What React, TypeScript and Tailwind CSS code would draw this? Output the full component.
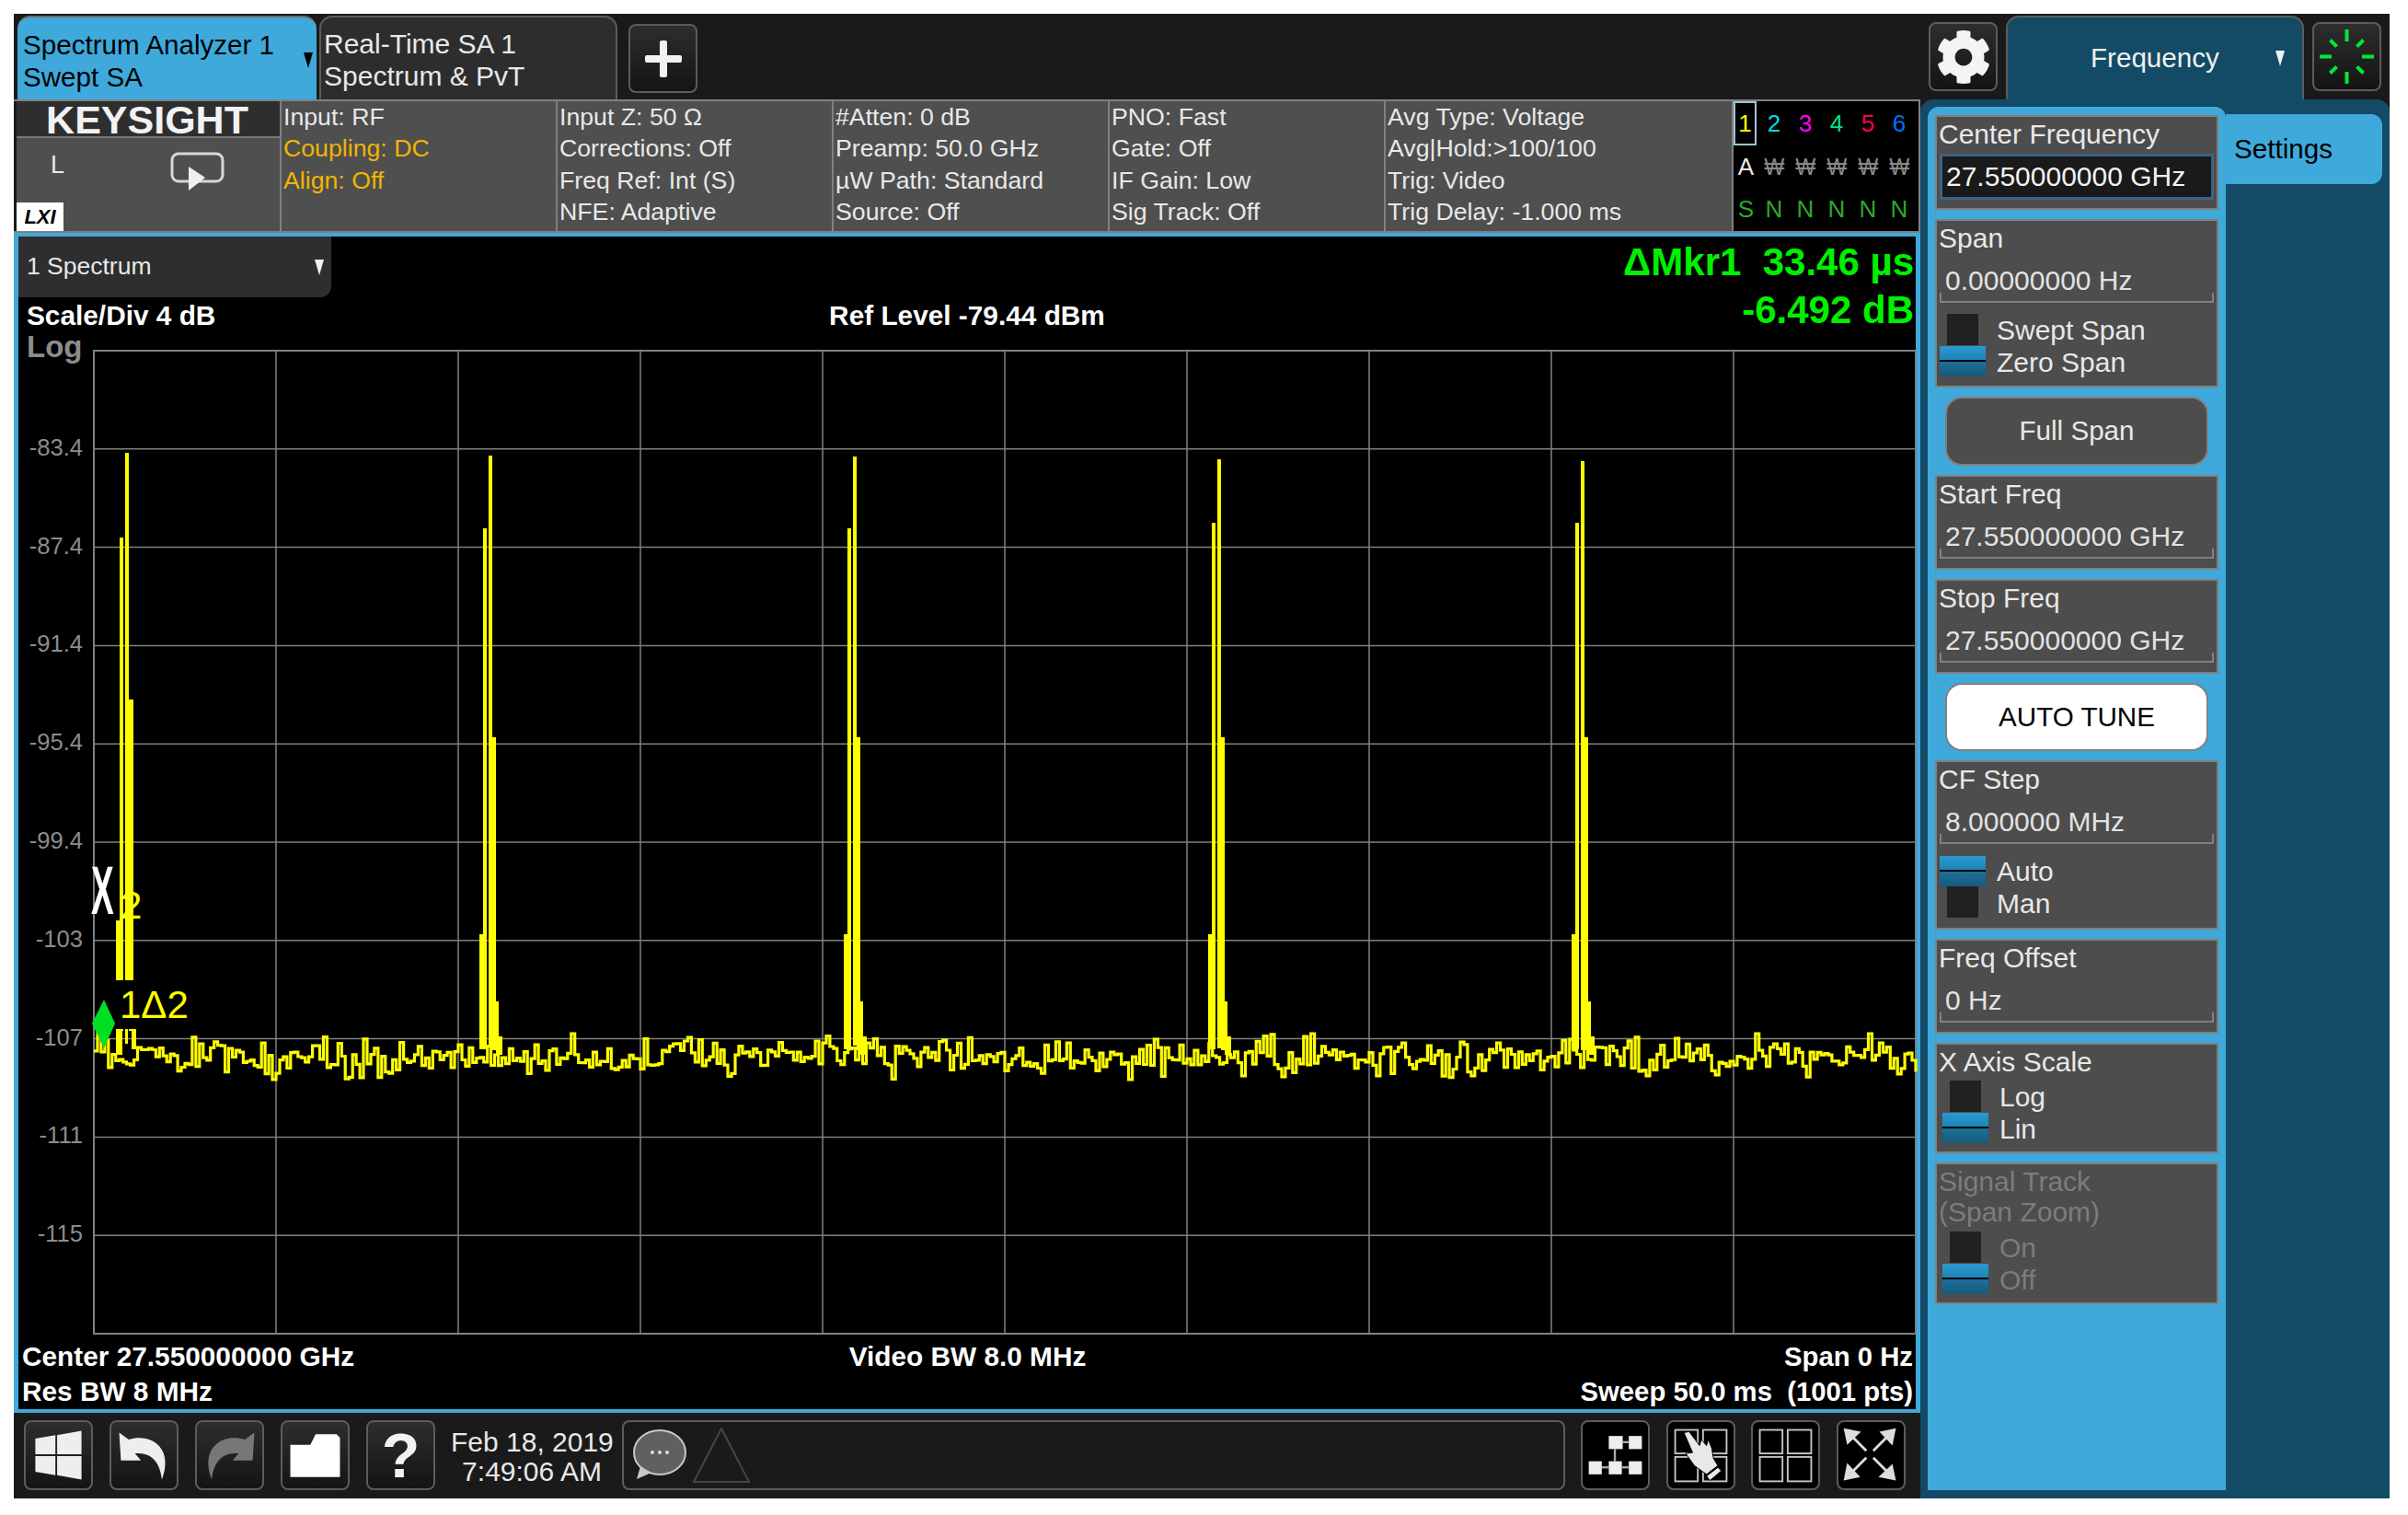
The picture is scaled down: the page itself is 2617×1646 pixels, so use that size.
import React from "react";
import { FaCog } from "react-icons/fa";

function mulberry(a: number) {
  return () => {
    a |= 0; a = (a + 0x6d2b79f5) | 0;
    let t = Math.imul(a ^ (a >>> 15), 1 | a);
    t = (t + Math.imul(t ^ (t >>> 7), 61 | t)) ^ t;
    return ((t ^ (t >>> 14)) >>> 0) / 4294967296;
  };
}
const rnd = mulberry(20190218);
function buildTrace() {
  let d = "";
  let base = 767;
  for (let i = 0; i <= 500; i++) {
    base = 767 + (base - 767) * 0.6 + (rnd() - 0.5) * 6;
    const g = (rnd() + rnd() + rnd() - 1.5) * 20;
    const y = Math.max(742, Math.min(797, base + g));
    const x = i * 3.96;
    d += i === 0 ? `M0 ${y.toFixed(1)}` : `H${x.toFixed(1)}V${y.toFixed(1)}`;
  }
  return d;
}
const tracePath = buildTrace();
const Y = "#ffff00";
const mains = [
  { m: 429, top: 114, sub: 193, side: 420 },
  { m: 825, top: 115, sub: 193, side: 420 },
  { m: 1221, top: 118, sub: 187, side: 420 },
  { m: 1616, top: 120, sub: 187, side: 420 },
];
const yLabels = ["-83.4", "-87.4", "-91.4", "-95.4", "-99.4", "-103", "-107", "-111", "-115"];

function Plot() {
  return (
    <svg width="1980" height="1068" viewBox="0 0 1980 1068" className="block overflow-visible">
      <rect x="0" y="0" width="1980" height="1068" fill="#000" stroke="#808080" strokeWidth="2" />
      {Array.from({ length: 9 }).map((_, i) => (
        <line key={i} x1={(i + 1) * 198} x2={(i + 1) * 198} y1="0" y2="1068" stroke="#808080" strokeWidth="1.5" />
      ))}
      {Array.from({ length: 9 }).map((_, i) => (
        <line key={i} y1={(i + 1) * 106.8} y2={(i + 1) * 106.8} x1="0" x2="1980" stroke="#808080" strokeWidth="1.5" />
      ))}
      <path d={tracePath} fill="none" stroke={Y} strokeWidth="3.2" />
      <g fill={Y}>
        <rect x="24" y="619" width="8" height="120" />
        <rect x="28" y="203" width="4" height="500" />
        <rect x="34" y="111" width="4" height="620" />
        <rect x="38" y="379" width="5" height="360" />
        {mains.map((p) => (
          <g key={p.m}>
            <rect x={p.m - 10} y="634" width="8" height="125" />
            <rect x={p.m - 6} y={p.sub} width="4" height="565" />
            <rect x={p.m} y={p.top} width="4" height="640" />
            <rect x={p.m + 4} y={p.side} width="4" height="340" />
            <rect x={p.m + 8} y="707" width="3" height="50" />
            <rect x={p.m + 8} y="745" width="7" height="20" />
          </g>
        ))}
      </g>
      <rect x="24" y="684" width="84" height="53" fill="#000" />
      <g fill={Y}>
        <rect x="24" y="737" width="7" height="28" />
        <rect x="34" y="737" width="3" height="16" />
        <rect x="41" y="737" width="5" height="22" />
      </g>
      <polygon points="-2,731 11,705 23,731 11,758" fill="#00e020" />
    </svg>
  );
}

function Caret({ color }: { color: string }) {
  return (
    <svg width="12" height="17" viewBox="0 0 12 17" className="shrink-0">
      <polygon points="1,0 11,0 6,17" fill={color} />
    </svg>
  );
}

function IconButton({ children, className }: { children: React.ReactNode; className?: string }) {
  return (
    <div className={`w-[75px] h-[76px] shrink-0 rounded-[8px] border-2 border-[#5c5c5c] flex items-center justify-center ${className ?? "bg-gradient-to-b from-[#2e2e2e] to-[#141414]"}`}>
      {children}
    </div>
  );
}

function Card({ h, children }: { h: string; children: React.ReactNode }) {
  return <div className={`${h} border-2 border-[#808080] bg-[#4d4d4d] pl-[2px] pr-[3px] pt-[2px] flex flex-col text-[#e8e8e8]`}>{children}</div>;
}
function Label({ children, dim }: { children: React.ReactNode; dim?: boolean }) {
  return <div className={`text-[30px] leading-[33px] ${dim ? "text-[#7c7c7c]" : ""}`}>{children}</div>;
}
function Value({ children }: { children: React.ReactNode }) {
  return (
    <div>
      <div className="mt-[13px] pl-[7px] text-[30px] leading-[33px] text-[#e2e2e2]">{children}</div>
      <div className="h-[11px] -mt-[3px] ml-[1px] border-2 border-t-0 border-[#808080]" />
    </div>
  );
}
function Toggle({ a, b, sel, dim, cls }: { a: string; b: string; sel: 0 | 1; dim?: boolean; cls: string }) {
  const row = (t: string, on: boolean, extra: string) => (
    <div className="h-[34px] flex items-center">
      <div className="w-[50px] h-[34px] flex items-center justify-center shrink-0">
        {on ? (
          <div className="w-[50px] h-[33px] flex flex-col">
            <div className="flex-1 bg-gradient-to-b from-[#2a9ad2] to-[#2084b6]" />
            <div className="h-[2px] bg-black" />
            <div className="flex-1 bg-gradient-to-b from-[#1c7099] to-[#175a7c]" />
          </div>
        ) : (
          <div className="w-[34px] h-[34px] bg-[#212121]" />
        )}
      </div>
      <div className={`ml-[12px] text-[30px] leading-[34px] ${extra} ${dim ? "text-[#7c7c7c]" : "text-[#e8e8e8]"}`}>{t}</div>
    </div>
  );
  return (
    <div className={cls}>
      {row(a, sel === 0, "pt-[1px]")}
      {row(b, sel === 1, "pt-[3px]")}
    </div>
  );
}

function InfoCol({ lines }: { lines: { t: string; o?: boolean }[] }) {
  return (
    <div className="w-[300px] shrink-0 border-l-2 border-[#808080] pl-[2px] bg-[#4f4f4f] text-[26.7px] leading-[34.3px] text-[#e8e8e8]">
      {lines.map((l) => (
        <div key={l.t} className={l.o ? "text-[#f2b400]" : ""}>{l.t}</div>
      ))}
    </div>
  );
}

function TraceCol() {
  const cols = ["#ffff00", "#00d8e8", "#ff00ff", "#00e080", "#ff0050", "#0070ff"];
  const grid = "grid grid-cols-[27px_34px_34px_34px_34px_34px] justify-items-center items-center";
  return (
    <div className="flex-1 bg-black border-x-2 border-[#808080] flex flex-col font-['Liberation_Sans','DejaVu_Sans',sans-serif]">
      <div className={`${grid} h-[48px] text-[26px]`}>
        {cols.map((c, i) => (
          <div key={c} style={{ color: c }} className={i === 0 ? "w-[25px] h-[48px] border-2 border-[#9cc4d4] flex items-center justify-center justify-self-start" : ""}>{i + 1}</div>
        ))}
      </div>
      <div className={`${grid} h-[48px] text-[#8a8a8a]`}>
        <div className="text-[#e8e8e8] text-[26px]">A</div>
        {[0, 1, 2, 3, 4].map((i) => <div key={i} className="text-[26px] leading-[30px] scale-x-90">₩</div>)}
      </div>
      <div className={`${grid} h-[47px] text-[26px] text-[#2ea82e]`}>
        {["S", "N", "N", "N", "N", "N"].map((s, i) => <div key={i}>{s}</div>)}
      </div>
    </div>
  );
}

function ArrowOut() {
  return (
    <svg width="75" height="76" viewBox="0 0 75 76">
      {[0, 90, 180, 270].map((r) => (
        <g key={r} transform={`rotate(${r} 36 37)`}>
          <polygon points="6,7 26,11 10,26" fill="#dddddd" />
          <line x1="16" y1="17" x2="32" y2="33" stroke="#dddddd" strokeWidth="3" />
        </g>
      ))}
    </svg>
  );
}

function Quad({ hand }: { hand?: boolean }) {
  return (
    <svg width="75" height="76" viewBox="0 0 75 76">
      <g fill="none" stroke="#c4c4c4" strokeWidth="2">
        <rect x="8" y="9" width="26" height="27" />
        <rect x="40" y="9" width="27" height="27" />
        <rect x="8" y="40" width="26" height="28" />
        <rect x="40" y="40" width="27" height="28" />
      </g>
      {hand && (
        <g fill="#e8e8e8" stroke="#000" strokeWidth="1">
          <path d="M18 12 L24 11 L36 27 L38 20 L44 27 L46 20 L50 30 L52 42 L57 50 L44 60 L30 50 L20 36 L28 35 Z" />
          <path d="M44 62 L57 52 L61 56 L48 67 Z" />
        </g>
      )}
    </svg>
  );
}

export default function App() {
  return (
    <div className="w-[2617px] h-[1646px] bg-white pl-[15px] pt-[15px] font-['Liberation_Sans',sans-serif] overflow-hidden">
      <div className="w-[2582px] h-[1613px] flex">
        {/* left column */}
        <div className="w-[2072px] flex flex-col shrink-0 bg-[#1a1a1a]">
          <div className="h-[93px] flex pl-[4px] pt-[2px] items-start shrink-0">
            <div className="w-[325px] h-[91px] rounded-t-[14px] border-t-2 border-[#6a6a6a] bg-[#3ea9da] flex pl-[6px] pr-[3px] text-black text-[29.6px] leading-[35px]">
              <div className="flex-1 pt-[12px]">
                <div>Spectrum Analyzer 1</div>
                <div>Swept SA</div>
              </div>
              <div className="pt-[38px]"><Caret color="#000" /></div>
            </div>
            <div className="ml-[3px] w-[324px] h-[91px] rounded-t-[14px] border-2 border-b-0 border-[#5c5c5c] bg-[#2d2d2d] pl-[3px] pt-[11px] text-[#e8e8e8] text-[30px] leading-[35px]">
              <div>Real-Time SA 1</div>
              <div>Spectrum &amp; PvT</div>
            </div>
            <div className="ml-[12px] mt-[9px] w-[75px] h-[75px] rounded-[8px] border-2 border-[#5c5c5c] bg-gradient-to-b from-[#2e2e2e] to-[#141414] flex items-center justify-center">
              <svg width="40" height="40" viewBox="0 0 40 40">
                <rect x="16" y="0" width="8" height="40" rx="2" fill="#f2f2f2" />
                <rect x="0" y="16" width="40" height="8" rx="2" fill="#f2f2f2" />
              </svg>
            </div>
          </div>

          <div className="h-[145px] flex pl-[3px] border-y-2 border-[#808080] shrink-0">
            <div className="w-[286px] shrink-0 flex flex-col bg-[#4f4f4f]">
              <div className="h-[40px] bg-[#2e2e2e] border-b-2 border-[#777] text-[43px] leading-[40px] font-bold text-[#f2f2f2] text-center pr-[2px]">KEYSIGHT</div>
              <div className="flex-1 flex flex-col">
                <div className="flex pl-[37px] pt-[14px]">
                  <div className="text-[27px] leading-[30px] text-[#e8e8e8] w-[130px]">L</div>
                  <svg width="60" height="44" viewBox="0 0 60 44" className="mt-[1px]">
                    <rect x="2" y="2" width="55" height="30" rx="7" fill="none" stroke="#d8d8d8" strokeWidth="3" />
                    <polygon points="20,16 38,28 20,42" fill="#f0f0f0" />
                  </svg>
                </div>
                <div className="mt-auto w-[51px] h-[31px] bg-white text-black italic font-bold text-[22px] leading-[31px] text-center">LXI</div>
              </div>
            </div>
            <InfoCol lines={[{ t: "Input: RF" }, { t: "Coupling: DC", o: true }, { t: "Align: Off", o: true }]} />
            <InfoCol lines={[{ t: "Input Z: 50 Ω" }, { t: "Corrections: Off" }, { t: "Freq Ref: Int (S)" }, { t: "NFE: Adaptive" }]} />
            <InfoCol lines={[{ t: "#Atten: 0 dB" }, { t: "Preamp: 50.0 GHz" }, { t: "µW Path: Standard" }, { t: "Source: Off" }]} />
            <InfoCol lines={[{ t: "PNO: Fast" }, { t: "Gate: Off" }, { t: "IF Gain: Low" }, { t: "Sig Track: Off" }]} />
            <div className="w-[378px] shrink-0 border-l-2 border-[#808080] pl-[2px] bg-[#4f4f4f] text-[26.7px] leading-[34.3px] text-[#e8e8e8]">
              <div>Avg Type: Voltage</div>
              <div>Avg|Hold:&gt;100/100</div>
              <div>Trig: Video</div>
              <div>Trig Delay: -1.000 ms</div>
            </div>
            <TraceCol />
          </div>

          <div className="h-[4px] bg-[#3ea9da] shrink-0" />

          <div className="h-[1274px] shrink-0 bg-black border-x-[5px] border-[#3ea9da] flex flex-col text-white font-bold text-[29.8px]">
            <div className="h-[66px] flex justify-between shrink-0">
              <div className="w-[340px] rounded-br-[12px] bg-[#2e2e2e] flex items-center justify-between pl-[9px] pr-[7px] font-normal text-[26.5px] text-[#e8e8e8]">
                <span>1 Spectrum</span>
                <Caret color="#f0f0f0" />
              </div>
              <div className="pt-[5px] pr-[2px] text-[42px] leading-[46px] text-[#00f000] whitespace-pre">ΔMkr1  33.46 µs</div>
            </div>
            <div className="h-[58px] grid grid-cols-3 shrink-0 leading-[40px]">
              <div className="pl-[9px]">Scale/Div 4 dB</div>
              <div className="text-center">Ref Level -79.44 dBm</div>
              <div className="text-right pr-[2px] text-[42px] leading-[46px] -mt-[9px] text-[#00f000]">-6.492 dB</div>
            </div>
            <div className="h-[1068px] flex shrink-0">
              <div className="w-[82px] shrink-0 font-normal text-[25.6px] text-[#8c8c8c] text-right pr-[12px]">
                <div className="h-[30px] -mt-[19px] text-left pl-[9px] font-bold text-[33px] leading-[30px] text-[#8c8c8c]">Log</div>
                <div className="mt-[40.6px]">
                  {yLabels.map((l) => (
                    <div key={l} className="h-[106.8px] flex items-center justify-end">{l}</div>
                  ))}
                </div>
              </div>
              <div className="relative w-[1980px]">
                <Plot />
                <div className="absolute left-[-3px] top-[550px] text-[74px] leading-[74px] font-bold text-white origin-left scale-x-50">X</div>
                <div className="absolute left-[29px] top-[582px] text-[42px] leading-[42px] font-normal text-[#ffff00]">2</div>
                <div className="absolute left-[28px] top-[687px] text-[42px] leading-[48px] font-normal text-[#ffff00]">1Δ2</div>
              </div>
            </div>
            <div className="flex-1 grid grid-cols-3 pt-[6px] leading-[38px] pl-[4px] pr-[3px] content-start">
              <div>Center 27.550000000 GHz</div>
              <div className="text-center">Video BW 8.0 MHz</div>
              <div className="text-right text-[29.3px]">Span 0 Hz</div>
              <div>Res BW 8 MHz</div>
              <div />
              <div className="text-right text-[29.3px] whitespace-pre">Sweep 50.0 ms  (1001 pts)</div>
            </div>
          </div>

          <div className="h-[4px] bg-[#3ea9da] shrink-0" />

          <div className="flex-1 flex items-start pt-[8px] pl-[11px]">
            <div className="flex gap-[18px]">
              <IconButton>
                <svg width="75" height="76" viewBox="0 0 75 76" fill="#eeeeee">
                  <polygon points="11,19 34,15 34,37 11,37" />
                  <polygon points="36,15 64,10 64,37 36,37" />
                  <polygon points="11,39 34,39 34,61 11,57" />
                  <polygon points="36,39 64,39 64,66 36,61" />
                </svg>
              </IconButton>
              <IconButton>
                <svg width="75" height="76" viewBox="0 0 75 76" fill="#eeeeee">
                  <path d="M9 12 L20 20 C46 12 72 30 58 66 C56 46 46 34 27 36 L34 44 L11 44 Z" />
                </svg>
              </IconButton>
              <IconButton>
                <svg width="75" height="76" viewBox="0 0 75 76" fill="#777777">
                  <path d="M66 12 L55 20 C29 12 3 30 17 66 C19 46 29 34 48 36 L41 44 L64 44 Z" />
                </svg>
              </IconButton>
              <IconButton>
                <svg width="75" height="76" viewBox="0 0 75 76" fill="#ffffff">
                  <path d="M9 26 H32 L38 14 H62 L66 18 V63 H9 Z" />
                </svg>
              </IconButton>
              <IconButton>
                <span className="text-[68px] leading-[76px] font-bold text-[#f2f2f2]">?</span>
              </IconButton>
            </div>
            <div className="w-[176px] ml-[17px] text-center text-[30px] leading-[32px] text-[#e8e8e8] pt-[8px] whitespace-nowrap">
              <div>Feb 18, 2019</div>
              <div>7:49:06 AM</div>
            </div>
            <div className="ml-[10px] w-[1025px] h-[76px] rounded-[8px] border-2 border-[#5c5c5c] flex items-center pl-[8px]">
              <svg width="62" height="56" viewBox="0 0 62 56">
                <ellipse cx="31" cy="25" rx="28" ry="24" fill="#606060" stroke="#c8c8c8" strokeWidth="2" />
                <path d="M10 40 L6 54 L22 47 Z" fill="#c8c8c8" />
                <g fill="#e0e0e0">
                  <circle cx="23" cy="25" r="2" /><circle cx="31" cy="25" r="2" /><circle cx="39" cy="25" r="2" />
                </g>
              </svg>
              <svg width="62" height="60" viewBox="0 0 62 60" className="ml-[5px]">
                <polygon points="31,1 61,59 1,59" fill="none" stroke="#454545" strokeWidth="2" />
              </svg>
            </div>
            <div className="ml-[17px] flex gap-[17.5px]">
              <IconButton className="bg-black">
                <svg width="75" height="76" viewBox="0 0 75 76">
                  <g stroke="#aaaaaa" strokeWidth="2.5">
                    <line x1="46" y1="23" x2="53" y2="23" />
                    <line x1="37" y1="31" x2="37" y2="45" />
                    <line x1="22" y1="52" x2="30" y2="52" />
                    <line x1="45" y1="52" x2="53" y2="52" />
                  </g>
                  <g fill="#eeeeee">
                    <rect x="30" y="16" width="16" height="15" />
                    <rect x="53" y="16" width="15" height="15" />
                    <rect x="7" y="45" width="15" height="15" />
                    <rect x="30" y="45" width="15" height="15" />
                    <rect x="53" y="45" width="15" height="15" />
                  </g>
                </svg>
              </IconButton>
              <IconButton className="bg-black"><Quad hand /></IconButton>
              <IconButton className="bg-black"><Quad /></IconButton>
              <IconButton className="bg-black"><ArrowOut /></IconButton>
            </div>
          </div>
        </div>

        {/* right column */}
        <div className="flex-1 flex flex-col bg-[#1a1a1a]">
          <div className="h-[93px] shrink-0 flex items-start pl-[9px]">
            <div className="mt-[9px] w-[75px] h-[75px] rounded-[8px] border-2 border-[#5c5c5c] bg-gradient-to-b from-[#2e2e2e] to-[#141414] flex items-center justify-center">
              <FaCog size={60} color="#f4f4f4" />
            </div>
            <div className="ml-[9px] mt-[2px] w-[324px] h-[91px] rounded-t-[14px] border-2 border-b-0 border-[#5c5c5c] bg-[#134a66] flex items-center pl-[90px] pr-[18px] text-[29.6px] text-[#f0f0f0]">
              <span className="flex-1">Frequency</span>
              <Caret color="#f0f0f0" />
            </div>
            <div className="ml-[9px] mt-[9px] w-[75px] h-[75px] rounded-[8px] border-2 border-[#5c5c5c] bg-gradient-to-b from-[#2e2e2e] to-[#141414] flex items-center justify-center">
              <svg width="71" height="71" viewBox="0 0 71 71">
                {[0, 45, 90, 135, 180, 225, 270, 315].map((r) => (
                  <line key={r} transform={`rotate(${r} 35.5 35.5)`} x1="35.5" x2="35.5" y1={r % 90 === 0 ? 6 : 10} y2={r % 90 === 0 ? 19 : 20} stroke="#00e838" strokeWidth="4" />
                ))}
              </svg>
            </div>
          </div>
          <div className="flex-1 rounded-t-[14px] bg-[#134a66] pl-[8px] pt-[8px] pb-[9px] flex">
            <div className="w-[324px] rounded-t-[12px] bg-[#3ea9da] px-[8px] pt-[9px] flex flex-col gap-[10px] shrink-0">
              <Card h="h-[103px]">
                <Label>Center Frequency</Label>
                <div className="mt-[5px] ml-[1px] h-[50px] border-[3px] border-[#3e6484] bg-[#1a1a1a] pl-[4px] text-[30px] leading-[44px] text-[#f2f2f2]">27.550000000 GHz</div>
              </Card>
              <Card h="h-[183px]">
                <Label>Span</Label>
                <Value>0.00000000 Hz</Value>
                <Toggle a="Swept Span" b="Zero Span" sel={1} cls="mt-[12px] ml-[1px]" />
              </Card>
              <div className="mx-[11px] h-[75px] rounded-[18px] border-2 border-[#808080] bg-[#4d4d4d] flex items-center justify-center text-[29.6px] text-[#e8e8e8]">Full Span</div>
              <Card h="h-[103px]">
                <Label>Start Freq</Label>
                <Value>27.550000000 GHz</Value>
              </Card>
              <Card h="h-[103px]">
                <Label>Stop Freq</Label>
                <Value>27.550000000 GHz</Value>
              </Card>
              <div className="mx-[11px] h-[74px] rounded-[18px] border-2 border-[#808080] bg-white flex items-center justify-center text-[29.6px] text-black">AUTO TUNE</div>
              <Card h="h-[184px]">
                <Label>CF Step</Label>
                <Value>8.000000 MHz</Value>
                <Toggle a="Auto" b="Man" sel={0} cls="mt-[12px] ml-[1px]" />
              </Card>
              <Card h="h-[103px]">
                <Label>Freq Offset</Label>
                <Value>0 Hz</Value>
              </Card>
              <Card h="h-[120px]">
                <Label>X Axis Scale</Label>
                <Toggle a="Log" b="Lin" sel={1} cls="mt-[4px] ml-[4px]" />
              </Card>
              <Card h="h-[154px]">
                <Label dim>Signal Track</Label>
                <Label dim>(Span Zoom)</Label>
                <Toggle a="On" b="Off" sel={1} dim cls="mt-[5px] ml-[4px]" />
              </Card>
            </div>
            <div className="mt-[8px] w-[170px] h-[76px] rounded-r-[12px] bg-[#3ea9da] flex items-center pl-[9px] text-[29.6px] text-black">Settings</div>
          </div>
        </div>
      </div>
    </div>
  );
}
